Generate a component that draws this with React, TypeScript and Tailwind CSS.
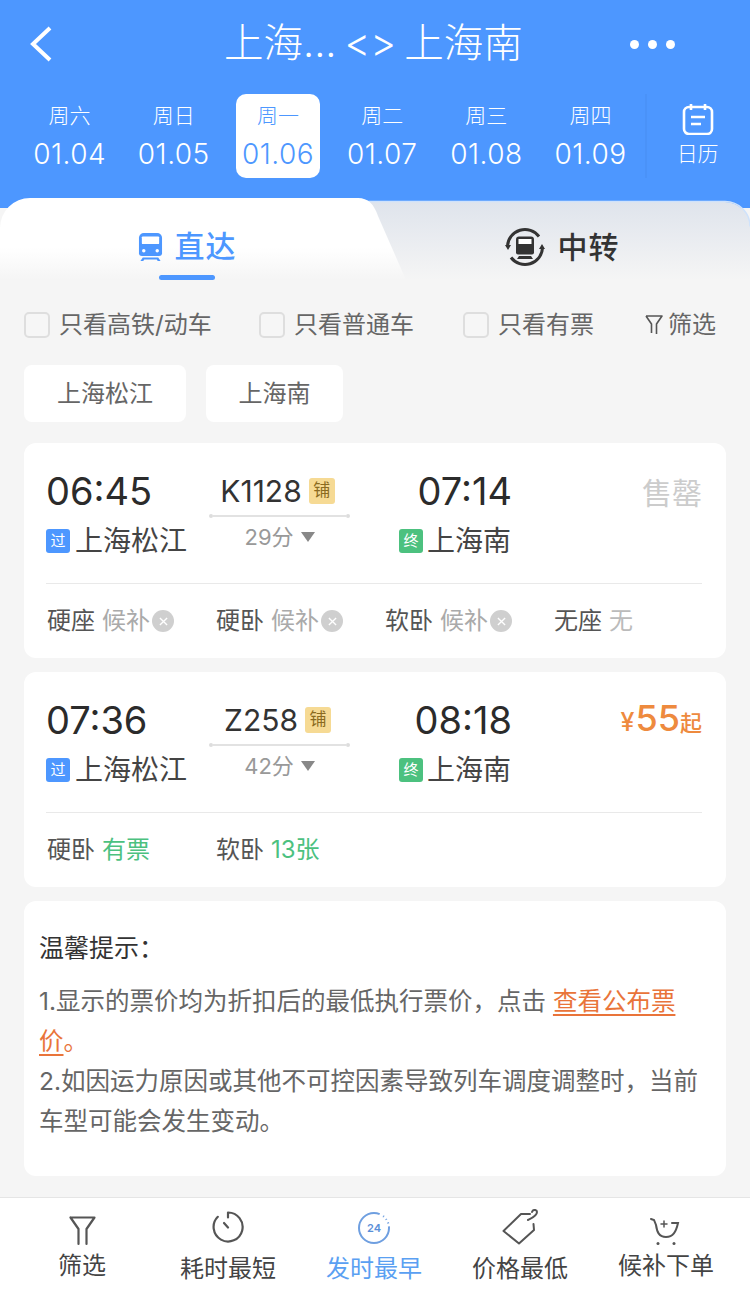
const FONT = "font-['Inter','Noto_Sans_CJK_SC',sans-serif]";

const days = [
  ["周六", "01.04"],
  ["周日", "01.05"],
  ["周一", "01.06"],
  ["周二", "01.07"],
  ["周三", "01.08"],
  ["周四", "01.09"],
];

const TrainIcon = ({ color, className }: { color: string; className: string }) => (
  <svg viewBox="0 0 26 30" className={className}>
    <path d="M6 1h14a5 5 0 0 1 5 5v16a3 3 0 0 1-3 3H4a3 3 0 0 1-3-3V6a5 5 0 0 1 5-5z" fill={color} />
    <rect x="4" y="4.500" width="18" height="8" rx="1" fill="#fff" />
    <circle cx="6" cy="19.500" r="1.800" fill="#fff" />
    <circle cx="20" cy="19.500" r="1.800" fill="#fff" />
    <path d="M5 26.500h16l2.500 3.500h-3l-1-1.600H6.500l-1 1.600h-3z" fill={color} />
  </svg>
);

const TransferIcon = () => (
  <svg viewBox="0 0 40 40" className="w-[40px] h-[40px]">
    <path d="M2.500 19A17.500 17.500 0 0 1 34 9.500" fill="none" stroke="#333" strokeWidth="3" />
    <path d="M37.500 21A17.500 17.500 0 0 1 6 30.500" fill="none" stroke="#333" strokeWidth="3" />
    <path d="M0 18h6l-3 5zM40 22h-6l3-5z" fill="#333" />
    <path d="M14 9.500h12a3 3 0 0 1 3 3v13a2 2 0 0 1-2 2H13a2 2 0 0 1-2-2v-13a3 3 0 0 1 3-3z" fill="#333" />
    <rect x="13.500" y="12" width="13" height="5" fill="#fff" />
    <path d="M14 29h12l2 3H12z" fill="#333" />
  </svg>
);

const Check = ({ label, className }: { label: string; className: string }) => (
  <div className={`flex items-center gap-[9px] ${className}`}>
    <div className="w-[26px] h-[26px] rounded-[5px] border-2 border-[#dedede] bg-[#f6f6f6]"></div>
    <span className="text-[24px] text-[#666]">{label}</span>
  </div>
);

const FunnelSmall = () => (
  <svg viewBox="0 0 18 22" className="w-[18px] h-[22px]" fill="none" stroke="#555" strokeWidth="1.600" strokeLinejoin="round">
    <path d="M1 2h16l-5.500 8v10M6.500 19V10L1 2" />
  </svg>
);

const Seat = ({ name, value, valueColor, cancel }: { name: string; value: string; valueColor: string; cancel?: boolean }) => (
  <div className="w-[169px] shrink-0 flex items-center">
    <span className="text-[24px] text-[#555]">{name}</span>
    <span className={`text-[24px] ml-[7px] ${valueColor}`}>{value}</span>
    {cancel && (
      <span className="ml-[2px] w-[22px] h-[22px] rounded-full bg-[#cfcfcf] flex items-center justify-center">
        <svg viewBox="0 0 10 10" className="w-[9px] h-[9px]" stroke="#fff" strokeWidth="1.500">
          <path d="M1 1l8 8M9 1l-8 8" />
        </svg>
      </span>
    )}
  </div>
);

const TrainCard = ({
  dep,
  arr,
  no,
  duration,
  right,
  seats,
}: {
  dep: string;
  arr: string;
  no: string;
  duration: string;
  right: React.ReactNode;
  seats: React.ReactNode;
}) => (
  <div className="mx-[24px] h-[215px] bg-white rounded-[12px] pl-[22px] pr-[24px] flex flex-col">
    <div className="h-[141px] border-b border-[#e9e9e9] flex pt-[26px]">
      <div className="w-[163px]">
        <div className="h-[44px] flex items-center text-[38px] leading-none text-[#2b2b2b]">{dep}</div>
        <div className="mt-[9px] flex items-center">
          <span className="w-[24px] h-[24px] rounded-[3px] bg-[#4d97ff] text-white text-[15px] flex items-center justify-center">过</span>
          <span className="ml-[5px] text-[28px] leading-[38px] text-[#444]">上海松江</span>
        </div>
      </div>
      <div className="w-[141px] flex flex-col items-center">
        <div className="h-[44px] flex items-center gap-[7px] pr-[4px]">
          <span className="text-[30px] leading-none text-[#333]">{no}</span>
          <span className="w-[26px] h-[26px] rounded-[3px] bg-[#f6da94] text-[#8a6a20] text-[17px] flex items-center justify-center">铺</span>
        </div>
        <div className="w-full mt-[1px] flex items-center">
          <span className="w-[4px] h-[4px] rounded-full bg-[#ddd]"></span>
          <span className="flex-1 h-[1.500px] bg-[#e2e2e2]"></span>
          <span className="w-[4px] h-[4px] rounded-full bg-[#ddd]"></span>
        </div>
        <div className="mt-[4px] flex items-center gap-[7px] text-[22px] leading-[30px] text-[#999]">
          {duration}
          <span className="w-0 h-0 border-x-[7px] border-x-transparent border-t-[10px] border-t-[#888]"></span>
        </div>
      </div>
      <div className="ml-[49px] w-[113px]">
        <div className="h-[44px] flex items-center justify-end text-[38px] leading-none text-[#2b2b2b]">{arr}</div>
        <div className="mt-[9px] flex items-center">
          <span className="w-[24px] h-[24px] rounded-[3px] bg-[#4cc17f] text-white text-[15px] flex items-center justify-center">终</span>
          <span className="ml-[4px] text-[28px] leading-[38px] text-[#444]">上海南</span>
        </div>
      </div>
      <div className="flex-1 flex justify-end">{right}</div>
    </div>
    <div className="flex-1 flex items-center pl-[1px]">{seats}</div>
  </div>
);

const TabItem = ({ icon, label, active }: { icon: React.ReactNode; label: string; active: boolean }) => (
  <div className="h-[60px] flex items-center">
    {icon}
    <span className={`text-[30px] font-medium tracking-[1px] ${active ? "text-[#4d97ff] ml-[12px]" : "text-[#333] ml-[13px]"}`}>{label}</span>
  </div>
);

const BottomItem = ({ icon, label, active, labelClass }: { icon: React.ReactNode; label: string; active?: boolean; labelClass: string }) => (
  <div className="flex flex-col items-center">
    <div className="h-[48px] flex items-end">{icon}</div>
    <span className={`text-[24px] leading-[32px] ${labelClass} ${active ? "text-[#5aa0f2]" : "text-[#444]"}`}>{label}</span>
  </div>
);

export default function App() {
  return (
    <div className={`w-[750px] h-[1294px] bg-[#f5f5f5] flex flex-col overflow-hidden ${FONT}`}>
      {/* top */}
      <div className="bg-[#4d97ff] h-[208px] shrink-0">
        <div className="h-[88px] flex items-center pl-[29px] pr-[75px]">
          <svg viewBox="0 0 24 36" className="w-[24px] h-[36px]" fill="none" stroke="#fff" strokeWidth="4">
            <path d="M21 2L4 18l17 16" />
          </svg>
          <div className="ml-[171px] text-[39.500px] font-light text-white leading-none whitespace-pre [word-spacing:-3px]">上海... &lt;&gt; 上海南</div>
          <div className="ml-auto flex gap-[9px]">
            <span className="w-[9px] h-[9px] rounded-full bg-white"></span>
            <span className="w-[9px] h-[9px] rounded-full bg-white"></span>
            <span className="w-[9px] h-[9px] rounded-full bg-white"></span>
          </div>
        </div>
        <div className="flex pl-[17.500px] mt-[6px]">
          {days.map(([w, d], i) => (
            <div key={d} className="w-[104.200px] flex justify-center">
              <div className={`w-[84px] h-[84px] rounded-[10px] flex flex-col items-center pt-[8px] ${i === 2 ? "bg-white text-[#4d97ff]" : "text-white"}`}>
                <span className="text-[21px] leading-[28px] font-light">{w}</span>
                <span className="text-[28px] leading-[36px] mt-[6px] tracking-[0.500px] whitespace-nowrap font-light">{d}</span>
              </div>
            </div>
          ))}
          <div className="ml-[2px] pl-[30px] flex flex-col items-center pt-[9px] text-white border-l-2 border-[#4a92f8] h-[84px]">
            <svg viewBox="0 0 32 32" className="w-[32px] h-[32px]" fill="none" stroke="#fff" strokeWidth="2.600">
              <rect x="2" y="4" width="28" height="27" rx="5" />
              <path d="M9 1v6M23 1v6M9 14h14M9 21h10" />
            </svg>
            <span className="text-[21px] leading-[28px] mt-[5px] font-light">日历</span>
          </div>
        </div>
      </div>

      {/* tabs */}
      <div className="relative h-[82px] -mt-[10px] shrink-0">
        <svg viewBox="0 0 750 82" className="absolute left-0 top-0 w-[750px] h-[82px]">
          <defs>
            <linearGradient id="rightTab" x1="0" y1="0" x2="0" y2="1">
              <stop offset="0" stopColor="#dfe4ec" />
              <stop offset="1" stopColor="#f5f5f5" />
            </linearGradient>
            <linearGradient id="leftTab" x1="0" y1="0" x2="0" y2="1">
              <stop offset="0.6" stopColor="#ffffff" />
              <stop offset="1" stopColor="#f5f5f5" />
            </linearGradient>
          </defs>
          <path d="M340 4h385a25 25 0 0 1 25 25v53H340z" fill="url(#rightTab)" />
          <path d="M340 3.500h385a25 25 0 0 1 25 25" fill="none" stroke="#cfe2fb" strokeWidth="1.500" />
          <path d="M0 82V30A30 30 0 0 1 30 0h328c10 0 16 6 20 18l28 64z" fill="url(#leftTab)" />
        </svg>
        <div className="relative flex h-full">
          <div className="w-[374px] flex flex-col items-center pt-[19px]">
            <TabItem active label="直达" icon={<TrainIcon color="#4d97ff" className="w-[25px] h-[29px]" />} />
            <div className="w-[56px] h-[5px] rounded-full bg-[#4d97ff] -mt-[1px]"></div>
          </div>
          <div className="w-[376px] flex flex-col items-center pt-[19px]">
            <TabItem active={false} label="中转" icon={<TransferIcon />} />
          </div>
        </div>
      </div>

      {/* filters */}
      <div className="h-[66px] flex items-center pl-[24px] shrink-0 mt-[12px]">
        <Check label="只看高铁/动车" className="w-[235px]" />
        <Check label="只看普通车" className="w-[204px]" />
        <Check label="只看有票" className="w-[182px]" />
        <div className="flex items-center gap-[5px]">
          <FunnelSmall />
          <span className="text-[24px] text-[#666]">筛选</span>
        </div>
      </div>
      <div className="flex gap-[20px] pl-[24px] shrink-0 mt-[7px]">
        <div className="w-[162px] h-[57px] bg-white rounded-[8px] flex items-center justify-center text-[24px] text-[#666]">上海松江</div>
        <div className="w-[137px] h-[57px] bg-white rounded-[8px] flex items-center justify-center text-[24px] text-[#666]">上海南</div>
      </div>

      {/* trains */}
      <div className="mt-[21px] flex flex-col gap-[14px] shrink-0">
        <TrainCard
          dep="06:45"
          arr="07:14"
          no="K1128"
          duration="29分"
          right={<span className="text-[30px] leading-[48px] text-[#ccc]">售罄</span>}
          seats={
            <>
              <Seat name="硬座" value="候补" valueColor="text-[#aaa]" cancel />
              <Seat name="硬卧" value="候补" valueColor="text-[#aaa]" cancel />
              <Seat name="软卧" value="候补" valueColor="text-[#aaa]" cancel />
              <Seat name="无座" value="无" valueColor="text-[#bbb]" />
            </>
          }
        />
        <TrainCard
          dep="07:36"
          arr="08:18"
          no="Z258"
          duration="42分"
          right={
            <div className="flex items-baseline text-[#ee8a3e] h-[44px] font-medium">
              <span className="text-[25px]">¥</span>
              <span className="text-[36px] leading-[40px] ml-[1px]">55</span>
              <span className="text-[22px]">起</span>
            </div>
          }
          seats={
            <>
              <Seat name="硬卧" value="有票" valueColor="text-[#4cc17f]" />
              <Seat name="软卧" value="13张" valueColor="text-[#4cc17f]" />
            </>
          }
        />
      </div>

      {/* notes */}
      <div className="mx-[24px] mt-[14px] h-[275px] bg-white rounded-[12px] pl-[15px] pr-[28px] pt-[27px] shrink-0">
        <div className="text-[25px] leading-[40px] text-[#333]">{"温馨提示\uFF1A"}</div>
        <div className="mt-[13px] text-[24.500px] leading-[40px] text-[#666]">
          {"1.显示的票价均为折扣后的最低执行票价\uFF0C点击 "}
          <span className="text-[#e9743a] underline underline-offset-4">查看公布票</span>
          <br />
          <span className="text-[#e9743a] underline underline-offset-4">价</span>
          <span className="text-[#e9743a]">{"\u3002"}</span>
          <br />
          {"2.如因运力原因或其他不可控因素导致列车调度调整时\uFF0C当前"}
          <br />
          {"车型可能会发生变动\u3002"}
        </div>
      </div>

      {/* bottom bar */}
      <div className="mt-[21px] flex-1 bg-white border-t border-[#e5e5e5] grid grid-cols-[146px_146px_146px_146px_146px] pl-[9px] pt-[4px]">
        <BottomItem
          label="筛选"
          labelClass=""
          icon={
            <svg viewBox="0 0 27 30" className="w-[27px] h-[30px] mb-[4px]" fill="none" stroke="#555" strokeWidth="2.200" strokeLinecap="round" strokeLinejoin="round">
              <path d="M1.500 1.500h24L17.500 13v15M9.500 28V13L1.500 1.500" />
            </svg>
          }
        />
        <BottomItem
          label="耗时最短"
          labelClass="mt-[3px]"
          icon={
            <svg viewBox="0 0 32 32" className="w-[32px] h-[32px] mb-[7px]" fill="none" stroke="#555" strokeWidth="2.200" strokeLinecap="round">
              <path d="M16 1.500A14.500 14.500 0 1 1 5.800 5.800M16 1.500v5M12 12l4 4.500" />
            </svg>
          }
        />
        <BottomItem
          label="发时最早"
          active
          labelClass="mt-[3px]"
          icon={
            <div className="relative w-[32px] h-[32px] mb-[6px] flex items-center justify-center">
              <svg viewBox="0 0 32 32" className="absolute inset-0 w-[32px] h-[32px]" fill="none" stroke="#6f9fe0" strokeWidth="2">
                <circle cx="16" cy="16" r="15" strokeDasharray="76 4 1 3 1 3 1 3" />
              </svg>
              <span className="relative text-[11px] font-semibold text-[#5a8fd8]">24</span>
            </div>
          }
        />
        <BottomItem
          label="价格最低"
          labelClass="mt-[3px]"
          icon={
            <svg viewBox="0 0 36 36" className="w-[36px] h-[36px] mb-[5px]" fill="none" stroke="#555" strokeWidth="2" strokeLinecap="round" strokeLinejoin="round">
              <path d="M28 5H19L1.500 22 17 34.500 32 21l-.5-6" />
              <path d="M26 11c4-2 9-4 9-8 0-2.500-4-3-5 0" />
            </svg>
          }
        />
        <BottomItem
          label="候补下单"
          labelClass=""
          icon={
            <svg viewBox="0 0 32 28" className="w-[32px] h-[28px] mb-[4px]" fill="none" stroke="#555" strokeWidth="2" strokeLinecap="round">
              <path d="M1 1l3 1 2 5c1 7 3 12 10 12s10-5 12-14h-6" />
              <path d="M11 6h6M14 3v6" strokeWidth="1.500" />
              <circle cx="8" cy="25.500" r="1.500" fill="#555" stroke="none" />
              <circle cx="24" cy="25.500" r="1.500" fill="#555" stroke="none" />
            </svg>
          }
        />
      </div>
    </div>
  );
}
